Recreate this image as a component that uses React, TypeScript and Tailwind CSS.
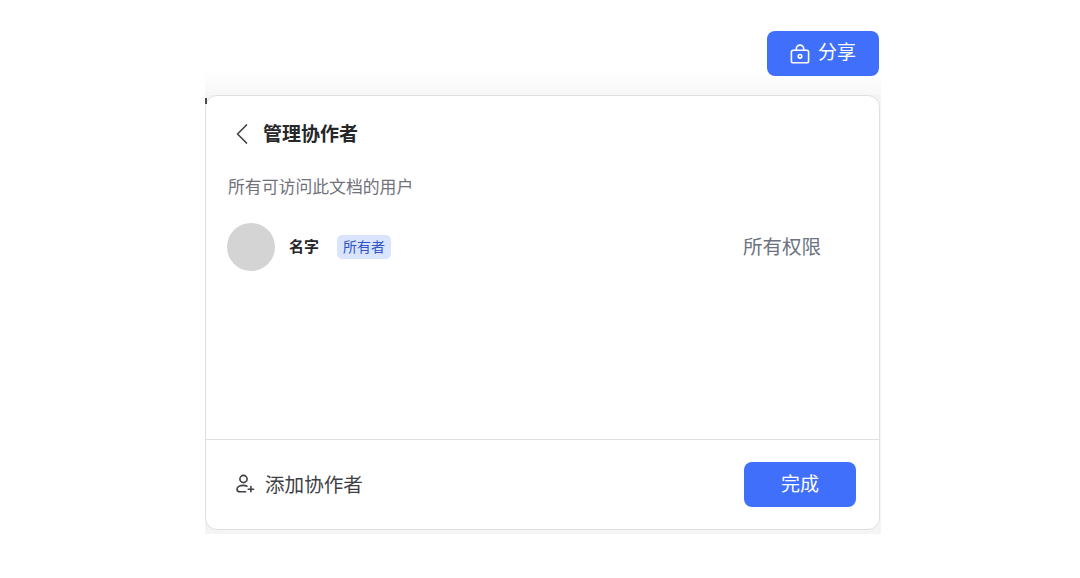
import React from 'react';
import { ChevronLeft } from 'lucide-react';

const fontStack = "font-['Inter','Noto_Sans_CJK_SC',sans-serif]";

const LockIcon = () => (
  <svg width="20" height="20" viewBox="0 0 20 20" fill="none" stroke="white" strokeWidth="1.6">
    <path d="M6.3 6.5V4.8a3.7 3.7 0 0 1 7.4 0v1.7" />
    <rect x="1.4" y="6.3" width="17.2" height="12.4" rx="1.8" />
    <circle cx="10" cy="12.3" r="1.8" />
  </svg>
);

const AddUserIcon = () => (
  <svg width="20" height="20" viewBox="0 0 20 20" fill="none" stroke="#3f3f46" strokeWidth="1.6" strokeLinecap="round">
    <circle cx="8.5" cy="5" r="3.6" />
    <path d="M12 12.2c-1-.5-2.2-.8-3.6-.8-3.6 0-6.4 1.6-6.4 3.8 0 1.6 1 2.6 3 2.6h5.6" />
    <path d="M13.2 15.2h5.4M15.9 12.6v5.2" />
  </svg>
);

export default function App() {
  return (
    <div className={`w-[1080px] h-[578px] bg-white pl-[6px] flex flex-col items-center overflow-hidden ${fontStack}`}>
      <div className="w-[676px] pt-[31px] h-[95px] flex justify-end bg-gradient-to-b from-white from-[75%] to-[#f7f7f8]">
        <button className="w-[112px] h-[45px] mr-[2px] rounded-[8px] bg-[#3f6ffb] text-white text-[19px] flex items-center justify-center gap-[8px]">
          <LockIcon />
          <span>分享</span>
        </button>
      </div>

      <div className="w-[676px] h-[439px] bg-[#f4f4f5] pr-[1px] pb-[4px] relative">
        <div className="absolute left-0 top-[3px] w-[2px] h-[6px] bg-[#4b4b4b]" />
        <div className="h-full bg-white rounded-[12px] border border-[#dedfe2] flex flex-col">
          <div className="flex-1 flex flex-col">
            <div className="h-[78px] pl-[18px] flex items-center gap-[3px]">
              <ChevronLeft size={36} strokeWidth={1.1} className="text-[#3f3f46] -mt-[2px]" />
              <span className="text-[19px] font-bold text-[#27272a]">管理协作者</span>
            </div>
            <p className="pl-[22px] pt-[1px] text-[16.85px] leading-[24px] text-[#71717a]">所有可访问此文档的用户</p>
            <div className="mt-[24px] pl-[21px] pr-[58px] flex items-center">
              <div className="w-[48px] h-[48px] rounded-full bg-[#d4d4d4]" />
              <span className="ml-[14px] text-[15px] font-bold text-[#27272a]">名字</span>
              <span className="ml-[18px] px-[6px] h-[24px] rounded-[5px] bg-[#dae4fc] text-[#2f55c8] text-[14px] leading-[24px]">所有者</span>
              <span className="ml-auto pt-[2px] text-[19.5px] text-[#6b7280]">所有权限</span>
            </div>
          </div>
          <div className="h-[90px] border-t border-[#dedfe2] pl-[29px] pr-[23px] flex items-center justify-between">
            <div className="flex items-center gap-[10px]">
              <AddUserIcon />
              <span className="pt-[2px] text-[19.6px] text-[#3f3f46]">添加协作者</span>
            </div>
            <button className="w-[112px] h-[45px] pt-[1px] rounded-[8px] bg-[#3f6ffb] text-white text-[19px]">完成</button>
          </div>
        </div>
      </div>
    </div>
  );
}
